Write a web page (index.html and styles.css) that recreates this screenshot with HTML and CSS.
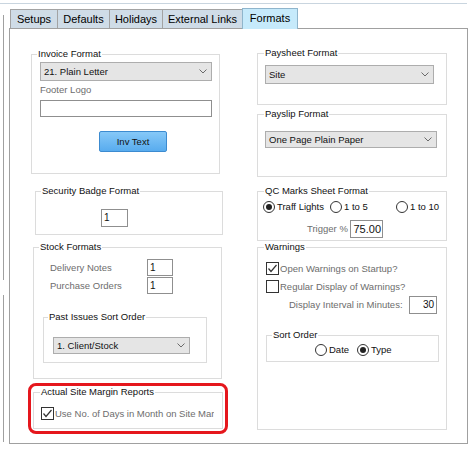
FILE: index.html
```html
<!DOCTYPE html>
<html>
<head>
<meta charset="utf-8">
<link rel="stylesheet" href="styles.css">
</head>
<body>
<div class="topline"></div>
<div class="main">
  <div class="sidebar"><div class="seg1"></div><div class="seg2"></div></div>
  <div class="tabctl">
    <div class="tabs">
      <div class="tab t1">Setups</div>
      <div class="tab t2">Defaults</div>
      <div class="tab t3">Holidays</div>
      <div class="tab t4">External Links</div>
      <div class="tab t5 sel">Formats</div>
    </div>
    <div class="panel">
      <div class="col left">
        <div class="group g-inv">
          <div class="gt">Invoice Format</div>
          <div class="select s-inv"><span>21. Plain Letter</span><svg viewBox="0 0 8 5"><polyline points="0.5,0.5 4,4 7.5,0.5" fill="none" stroke="#6a6a6a"/></svg></div>
          <div class="lbl muted l-footer">Footer Logo</div>
          <div class="input i-footer"></div>
          <div class="btn b-inv">Inv Text</div>
        </div>
        <div class="group g-sec">
          <div class="gt">Security Badge Format</div>
          <div class="input i-sec">1</div>
        </div>
        <div class="group g-stock">
          <div class="gt">Stock Formats</div>
          <div class="frow r1"><span class="muted flbl">Delivery Notes</span><div class="input i-stock">1</div></div>
          <div class="frow r2"><span class="muted flbl">Purchase Orders</span><div class="input i-stock">1</div></div>
          <div class="group g-past">
            <div class="gt gt-past">Past Issues Sort Order</div>
            <div class="select s-past"><span>1. Client/Stock</span><svg viewBox="0 0 8 5"><polyline points="0.5,0.5 4,4 7.5,0.5" fill="none" stroke="#6a6a6a"/></svg></div>
          </div>
        </div>
        <div class="hl">
          <div class="group g-act">
            <div class="gt gt-act">Actual Site Margin Reports</div>
            <div class="cbrow r-act"><div class="cb"><svg viewBox="0 0 11 11"><polyline points="1.5,5.5 4,8.5 9.5,2" fill="none" stroke="#333" stroke-width="1.2"/></svg></div><span class="muted cbt">Use No. of Days in Month on Site Margin Reports</span></div>
          </div>
        </div>
      </div>
      <div class="col right">
        <div class="group g-pays">
          <div class="gt gt-r">Paysheet Format</div>
          <div class="select s-pays"><span>Site</span><svg viewBox="0 0 8 5"><polyline points="0.5,0.5 4,4 7.5,0.5" fill="none" stroke="#6a6a6a"/></svg></div>
        </div>
        <div class="group g-slip">
          <div class="gt gt-r">Payslip Format</div>
          <div class="select s-slip"><span>One Page Plain Paper</span><svg viewBox="0 0 8 5"><polyline points="0.5,0.5 4,4 7.5,0.5" fill="none" stroke="#6a6a6a"/></svg></div>
        </div>
        <div class="group g-qc">
          <div class="gt gt-r">QC Marks Sheet Format</div>
          <div class="rrow r-qc">
            <div class="ritem q1"><div class="rb on"></div><span class="rt">Traff Lights</span></div>
            <div class="ritem q2"><div class="rb"></div><span class="rt">1 to 5</span></div>
            <div class="ritem q3"><div class="rb"></div><span class="rt">1 to 10</span></div>
          </div>
          <div class="frow r-trig"><span class="muted tlbl">Trigger %</span><div class="input i-trig">75.00</div></div>
        </div>
        <div class="group g-warn">
          <div class="gt gt-r">Warnings</div>
          <div class="cbrow w1"><div class="cb"><svg viewBox="0 0 11 11"><polyline points="1.5,5.5 4,8.5 9.5,2" fill="none" stroke="#333" stroke-width="1.2"/></svg></div><span class="muted cbt">Open Warnings on Startup?</span></div>
          <div class="cbrow w2"><div class="cb"></div><span class="muted cbt">Regular Display of Warnings?</span></div>
          <div class="frow r-int"><span class="muted ilbl">Display Interval in Minutes:</span><div class="input i-int">30</div></div>
          <div class="group g-sort">
            <div class="gt gt-sort">Sort Order</div>
            <div class="rrow r-sort">
              <div class="ritem d1"><div class="rb"></div><span class="rt">Date</span></div>
              <div class="ritem d2"><div class="rb on"></div><span class="rt">Type</span></div>
            </div>
          </div>
        </div>
      </div>
    </div>
  </div>
</div>
</body>
</html>
```
FILE: styles.css
```css
* { box-sizing: border-box; }
body {
  margin: 0;
  background: #fff;
  font-family: "Liberation Sans", Arial, sans-serif;
  font-size: 9.5px;
  color: #1a1a1a;
}
.topline { margin-top: 3px; height: 1px; width: 467px; background: #c9d5df; }
.main { display: flex; }
.sidebar { margin-left: 3px; width: 1px; display: flex; flex-direction: column; }
.seg1 { margin-top: 11px; height: 265px; background: #a0a0a0; }
.seg2 { margin-top: 15px; height: 147px; background: #a0a0a0; }
.tabctl { margin-left: 5px; width: 459px; }
.tabs { display: flex; align-items: flex-end; height: 24px; padding: 4px 0 0 1px; }
.tab {
  height: 19px;
  border: 1px solid #a3a3a3;
  border-bottom: 0;
  background: #cfdce7;
  font-size: 11px;
  line-height: 18px;
  text-align: center;
  color: #000;
  margin-left: -1px;
  white-space: nowrap;
}
.tab.t1 { margin-left: 0; width: 48px; }
.tab.t2 { width: 53px; }
.tab.t3 { width: 54px; }
.tab.t4 { width: 81px; }
.tab.t5 { width: 56px; }
.tab.sel {
  height: 21px;
  margin-bottom: -1px;
  background: #c6eafb;
  border-color: #8fb5cc;
  position: relative;
  z-index: 1;
  line-height: 19px;
}
.panel { display: flex; height: 416px; border: 1px solid #a0a0a0; background: #fff; }
.col { display: flex; flex-direction: column; align-items: flex-start; }
.col.left { width: 230px; }
.col.right { width: 227px; }

.group {
  border: 1px solid #dcdcdc;
  display: flex;
  flex-direction: column;
  align-items: flex-start;
  flex-shrink: 0;
}
.gt {
  margin: -7px 0 0 5px;
  padding: 0 1px;
  background: #fff;
  line-height: 12px;
  color: #111;
  white-space: nowrap;
}
.gt-r { margin-left: 6px; }
.gt-past { margin-left: 4px; }
.gt-act { margin-left: 6px; }
.gt-sort { margin-left: 5px; }
.muted { color: #6d6d6d; }
.lbl { line-height: 12px; }

.select {
  display: flex;
  align-items: center;
  justify-content: space-between;
  border: 1px solid #adadad;
  background: #e5e5e5;
  padding: 0 4px 0 3px;
  line-height: 12px;
  color: #111;
  white-space: nowrap;
}
.select svg { width: 8px; height: 5px; flex-shrink: 0; }
.input {
  border: 1px solid #8f8f8f;
  background: #fff;
  font-size: 10px;
  line-height: 15px;
  padding: 0 2px;
  color: #111;
  flex-shrink: 0;
}
.btn {
  width: 68px;
  height: 21px;
  border: 1px solid #3c8bd0;
  border-radius: 2px;
  background: linear-gradient(#86c8f8, #58acee);
  text-align: center;
  line-height: 19px;
  color: #111;
}
.cb {
  width: 13px;
  height: 13px;
  border: 1px solid #333;
  background: #fff;
  flex-shrink: 0;
}
.cb svg { display: block; width: 11px; height: 11px; }
.rb {
  width: 12px;
  height: 12px;
  border: 1px solid #333;
  border-radius: 50%;
  background: #fff;
  display: flex;
  align-items: center;
  justify-content: center;
  flex-shrink: 0;
}
.rb.on::after { content: ""; width: 6px; height: 6px; border-radius: 50%; background: #222; }
.rrow { display: flex; align-items: center; height: 12px; }
.ritem { display: flex; align-items: center; white-space: nowrap; }
.rt { margin-left: 2px; line-height: 12px; color: #111; }
.cbrow { display: flex; align-items: center; height: 13px; white-space: nowrap; }
.cbt { margin-left: 1px; line-height: 12px; }
.frow { display: flex; align-items: center; }

/* Invoice */
.g-inv { margin: 25px 0 0 21px; width: 189px; height: 120px; }
.s-inv { margin: 2px 0 0 8px; width: 172px; height: 19px; }
.l-footer { margin: 3px 0 0 8px; }
.i-footer { margin: 4px 0 0 8px; width: 172px; height: 17px; }
.b-inv { margin: 14px 0 0 67px; }

/* Security */
.g-sec { margin: 17px 0 0 25px; width: 188px; height: 44px; }
.i-sec { margin: 12px 0 0 65px; width: 27px; height: 18px; }

/* Stock */
.g-stock { margin: 12px 0 0 23px; width: 189px; height: 132px; }
.r1 { margin: 6px 0 0 16px; height: 17px; }
.r2 { margin: 1px 0 0 16px; height: 17px; }
.flbl { width: 97px; line-height: 12px; }
.i-stock { width: 26px; height: 17px; line-height: 15px; }
.g-past { margin: 23px 0 0 9px; width: 164px; height: 46px; }
.s-past { margin: 14px 0 0 9px; width: 137px; height: 17px; }

/* Highlight */
.hl {
  margin: 4px 0 0 18px;
  width: 200px;
  height: 51px;
  border: 3px solid #e5171d;
  border-radius: 8px;
  display: flex;
  flex-direction: column;
  align-items: flex-start;
}
.g-act { margin: 6px 0 0 2px; width: 190px; height: 37px; }
.r-act { margin: 9px 0 0 7px; width: 173px; overflow: hidden; }

/* Right */
.g-pays { margin: 24px 0 0 17px; width: 190px; height: 52px; }
.s-pays { margin: 6px 0 0 7px; width: 169px; height: 19px; }
.g-slip { margin: 9px 0 0 17px; width: 190px; height: 63px; }
.s-slip { margin: 11px 0 0 7px; width: 172px; height: 17px; }
.g-qc { margin: 14px 0 0 17px; width: 190px; height: 50px; }
.r-qc { margin: 4px 0 0 5px; }
.q1 { width: 67px; }
.q2 { width: 66px; }
.r-trig { margin: 7px 0 0 49px; }
.tlbl { width: 43px; line-height: 12px; }
.i-trig { width: 33px; height: 18px; text-align: right; font-size: 11px; line-height: 16px; padding-right: 1px; }
.g-warn { margin: 6px 0 0 17px; width: 190px; height: 183px; }
.w1 { margin: 9px 0 0 8px; }
.w2 { margin: 5px 0 0 8px; }
.r-int { margin: 3px 0 0 31px; }
.ilbl { width: 120px; line-height: 12px; white-space: nowrap; }
.i-int { width: 28px; height: 18px; text-align: right; line-height: 16px; }
.g-sort { margin: 21px 0 0 8px; width: 173px; height: 27px; }
.r-sort { margin: 3px 0 0 48px; }
.d1 { width: 42px; }
```
